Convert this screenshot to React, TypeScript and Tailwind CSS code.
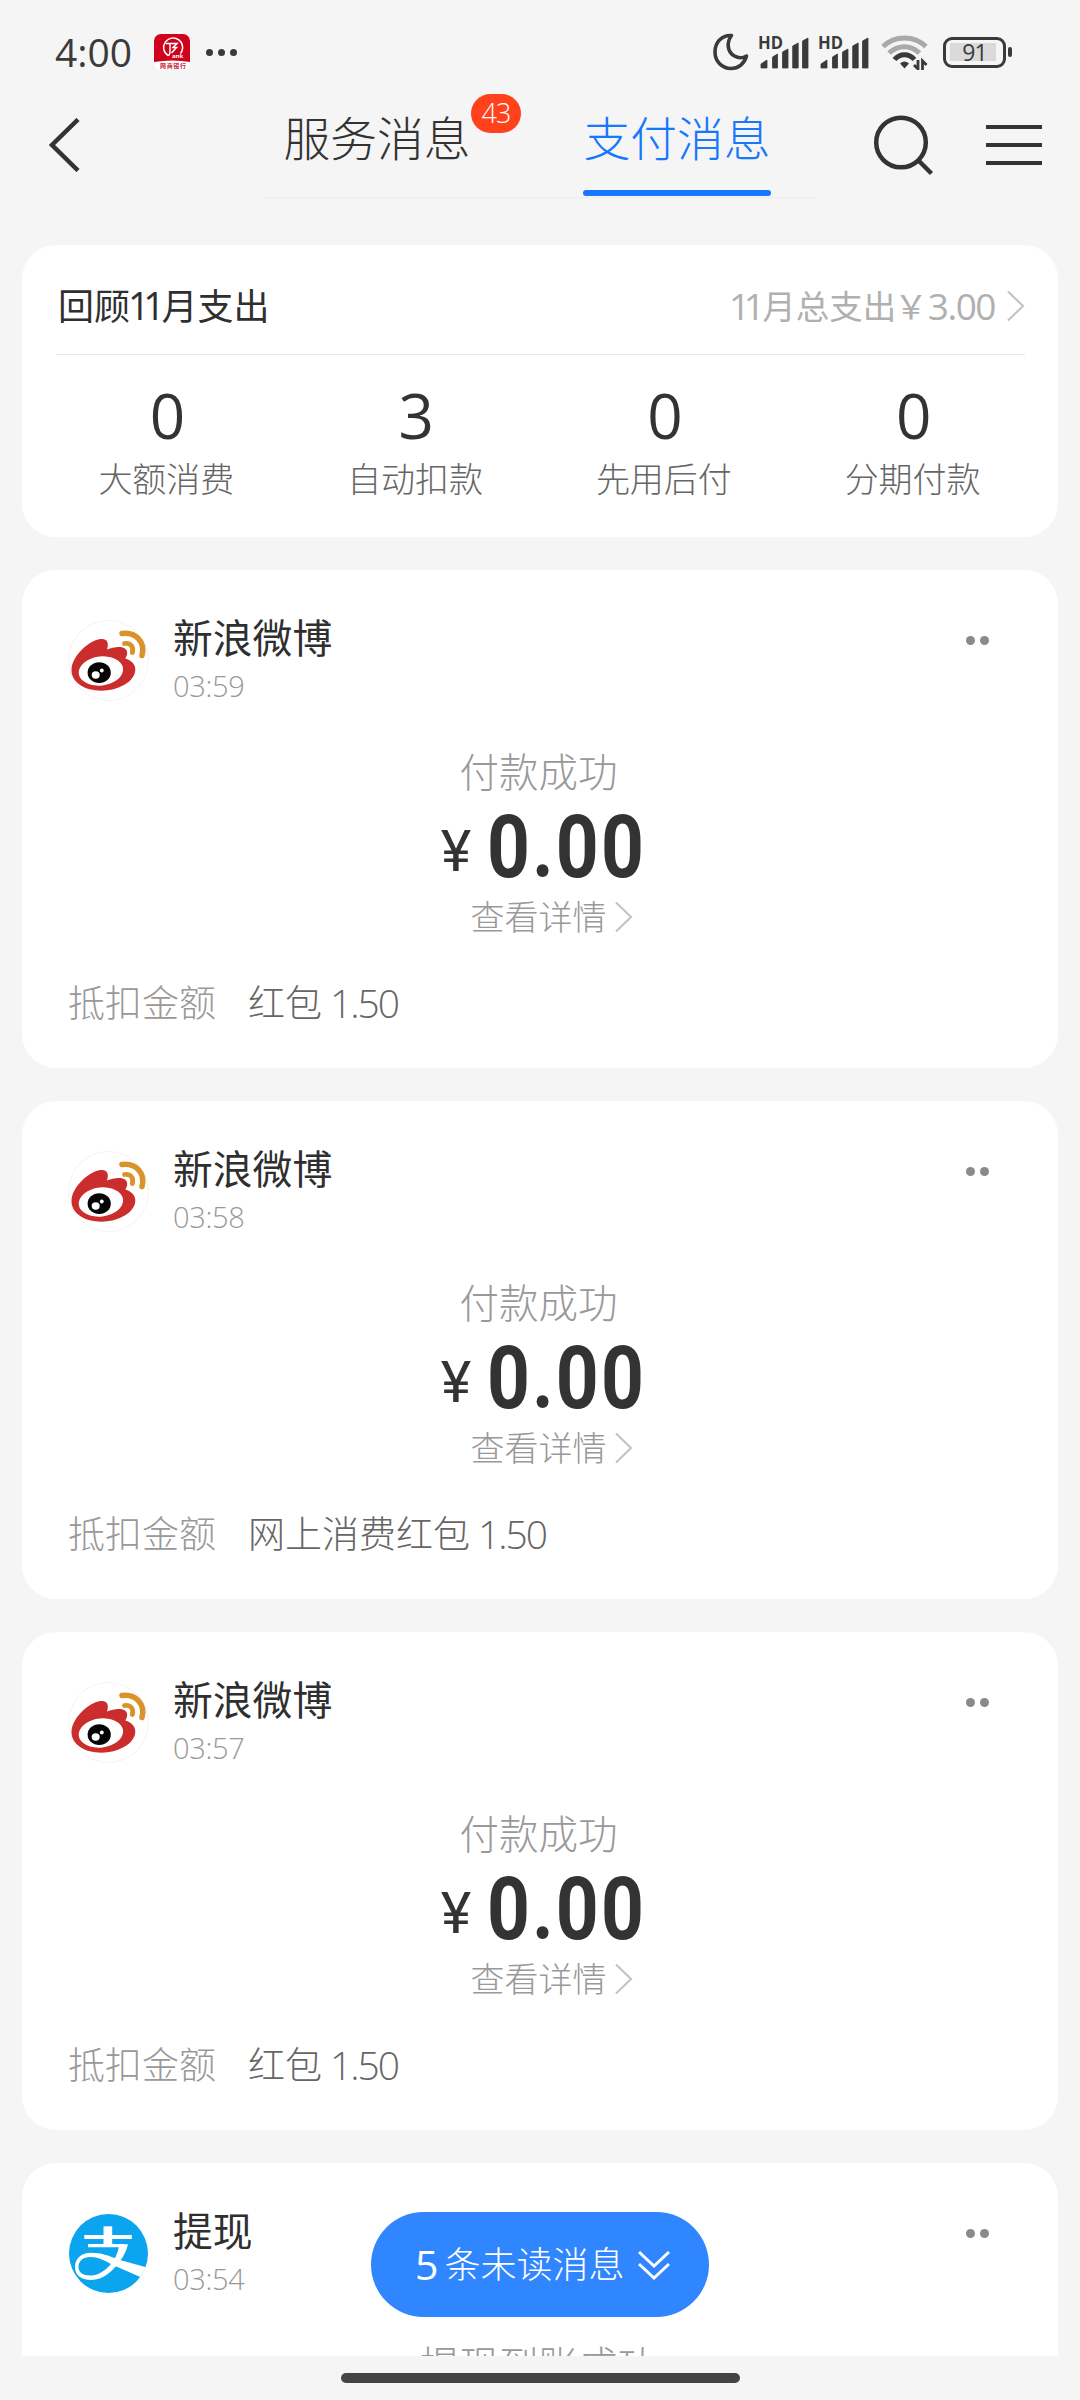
// App.tsx
import type { ReactNode } from 'react'

interface Message {
  name: string
  time: string
  logo: 'weibo' | 'alipay'
  status: string
  amount?: string
  discount?: [string, string]
}

const messages: Message[] = [
  { name: '新浪微博', time: '03:59', logo: 'weibo', status: '付款成功', amount: '0.00', discount: ['红包', '1.50'] },
  { name: '新浪微博', time: '03:58', logo: 'weibo', status: '付款成功', amount: '0.00', discount: ['网上消费红包', '1.50'] },
  { name: '新浪微博', time: '03:57', logo: 'weibo', status: '付款成功', amount: '0.00', discount: ['红包', '1.50'] },
  { name: '提现', time: '03:54', logo: 'alipay', status: '提现到账成功' },
]

const stats = [
  { value: '0', label: '大额消费' },
  { value: '3', label: '自动扣款' },
  { value: '0', label: '先用后付' },
  { value: '0', label: '分期付款' },
]

function WeiboLogo() {
  return (
    <svg width="81" height="81" viewBox="0.5 0 81 81" fill="none">
      <circle cx="41" cy="40.5" r="40" fill="#fff" stroke="#f7f1f1" />
      <path d="M4 50C4 37 20 21 33 19c6-.8 9 3 6.500 10.500C46 27 54 25.500 58 29c2.600 2.600 2 6-.2 9.500C64 40.500 67.800 44 67.800 49.500 67.800 62 50 70.700 34 70.700 17 70.700 4 62.500 4 50Z" fill="#cb2c2c" />
      <ellipse cx="33.400" cy="51" rx="22.300" ry="14.500" transform="rotate(-7 33.400 51)" fill="#fff" />
      <ellipse cx="31.700" cy="52.700" rx="11.600" ry="10.400" fill="#050505" />
      <ellipse cx="28.200" cy="55" rx="4" ry="3.700" fill="#fff" />
      <circle cx="34.300" cy="50.500" r="1.900" fill="#fff" />
      <path d="M54.500 13.500C68 11.500 78 22 74.500 35.500" stroke="#d8942a" strokeWidth="5.500" strokeLinecap="round" />
      <path d="M57 23.500c6-1 9.500 3.500 7.800 9" stroke="#d8942a" strokeWidth="4.800" strokeLinecap="round" />
    </svg>
  )
}

function AlipayLogo() {
  return (
    <svg width="81" height="81" viewBox="-1 -1 81 81" fill="none">
      <circle cx="39.500" cy="39.500" r="39.500" fill="#0aa5ee" />
      <path d="M34.500 12.300h8.700V32h-8.700z" fill="#fff" />
      <path d="M15.300 23h47.500" stroke="#fff" strokeWidth="4" />
      <path d="M19 31.700h36" stroke="#fff" strokeWidth="3.200" />
      <path d="M50.500 30.200h8.500C57.500 36.500 54.500 42.500 51 47c-7 10-17 19-29 19C12 66 6 61 6 53c0-9 7-14.200 16-14.200 10 0 18.500 3 25.500 6.200L77 53.300 71.300 63 45 51.500C38 48 30.500 43 21.500 43 14 43 9.500 47 9.500 53c0 5 4 8.500 12 8.500 10 0 18.500-8 23.500-15.500 2.500-4.500 4.500-10 5.500-15.800Z" fill="#fff" />
    </svg>
  )
}

function Signal() {
  return (
    <svg width="50" height="36" viewBox="0 0 50 36" fill="#3a3a3a" className="overflow-visible">
      <text x="-1" y="14.500" fontSize="17" fontWeight="700" textLength="25" lengthAdjust="spacingAndGlyphs">HD</text>
      <path d="M2 34v-4l6-4v8zM13.500 34V23l5-3v14zM23.500 34V18l5.500-3v19zM33.700 34V12l5.500-3v25zM43.500 34V7l5.500-3v30z" stroke="#3a3a3a" strokeWidth=".8" strokeLinejoin="round" />
    </svg>
  )
}

function StatusBar() {
  return (
    <div className="flex h-[84px] shrink-0 items-center pt-5 pl-[55px] text-[#3a3a3a]">
      <span className="w-[78px] text-[39px] leading-10 whitespace-nowrap">4:00</span>
      <svg width="36" height="36" viewBox="0 0 36 36" className="ml-[21px]" fill="none">
        <rect width="36" height="36" rx="7" fill="#fff" />
        <path d="M0 28V7a7 7 0 0 1 7-7h22a7 7 0 0 1 7 7v21q-18-3-36 0Z" fill="#d0021b" />
        <path d="M14 21.500a9.500 9.500 0 1 1 12.500-2M12 9.500h11l-4 4h3.500l-5 5.500M16 10v7q0 4-2 4.500" stroke="#fff" strokeWidth="1.500" />
        <text x="18" y="24" fontSize="6" fontWeight="700" fill="#fff">ank</text>
        <text x="6" y="34" fontSize="6" fontWeight="700" fill="#c6283a" textLength="26">网商银行</text>
      </svg>
      <div className="ml-[16px] flex gap-[5px]">
        <i className="size-[7px] rounded-full bg-[#3a3a3a]" />
        <i className="size-[7px] rounded-full bg-[#3a3a3a]" />
        <i className="size-[7px] rounded-full bg-[#3a3a3a]" />
      </div>
      <svg width="36" height="38" viewBox="0 0 36 38" className="ml-[476px]" fill="none" stroke="#3a3a3a" strokeWidth="3.600" strokeLinejoin="round">
        <path d="M18.500 2.500C9 2 2 9 2 19c0 9.500 7 16.500 16 16.500 7.500 0 13.500-5 15.500-12.500-3.500 2-8 2.500-12 0C14 19 13.500 9 18.500 2.500Z" />
      </svg>
      <div className="ml-[10px] flex gap-[10px]">
        <Signal />
        <Signal />
      </div>
      <svg width="48" height="36" viewBox="0 0 48 36" className="ml-[12px]" fill="none" strokeWidth="5">
        <path d="M2 12.500C14 1 33 1 45 12.500" stroke="#a9a9a9" />
        <path d="M8 19c9-8.500 21.500-8.500 30.500 0" stroke="#a9a9a9" />
        <path d="M13.500 25.500c5.500-6.500 14.500-6.500 20 0" stroke="#3a3a3a" />
        <path d="M19 29.500q4.500-4 9 0l-4.500 5z" fill="#3a3a3a" />
        <path d="M37 26v9l-4-4M41.500 36v-9l4 4" stroke="#3a3a3a" strokeWidth="2.800" />
      </svg>
      <div className="ml-[14px] flex h-[31px] w-[63px] items-center justify-center rounded-[9px] border-[3.500px] border-[#3a3a3a] p-[3.500px]">
        <span className="h-full w-full bg-[linear-gradient(to_right,#dadada_91%,transparent_91%)] text-center text-[23px] leading-[18px] tracking-[-1px]">91</span>
      </div>
      <i className="ml-[2px] h-[10px] w-1 rounded-sm bg-[#3a3a3a]" />
    </div>
  )
}

function Tab({ children, active, badge }: { children: ReactNode; active?: boolean; badge?: number }) {
  return (
    <div className={`relative flex h-[112px] w-[188px] flex-col items-center ${active ? 'text-[#1677ff]' : 'text-[#333]'}`}>
      <span className="mt-[30px] text-[46.800px] leading-[48px] font-light whitespace-nowrap">{children}</span>
      {active && <i className="mt-[28px] h-[6px] w-full rounded-full bg-[#1677ff]" />}
      {badge && (
        <span className="absolute top-[10px] left-[188px] flex h-[39px] w-[50px] items-center justify-center rounded-full bg-[#ff411c] text-[27px] font-light tracking-[-1px] text-white">
          {badge}
        </span>
      )}
    </div>
  )
}

function Header() {
  return (
    <div className="flex h-[114px] shrink-0 items-start pl-[48px]">
      <svg width="32" height="54" viewBox="0 0 32 54" className="mt-[34px]" fill="none" stroke="#333" strokeWidth="4.500">
        <path d="M30 1.500 4 27l26 25.500" />
      </svg>
      <div className="ml-[185px] flex h-[114px] w-[550px] gap-[112px] border-b-[1.500px] border-[#ececec] pl-[18px]">
        <Tab badge={43}>服务消息</Tab>
        <Tab active>支付消息</Tab>
      </div>
      <svg width="62" height="62" viewBox="0 0 62 62" className="ml-[57px] mt-[30px]" fill="none" stroke="#333" strokeWidth="4.500">
        <circle cx="29" cy="28.500" r="24.800" />
        <path d="m46 46 13.500 13.500" />
      </svg>
      <div className="ml-[52px] mt-[41px] flex flex-col gap-[14px]">
        <i className="h-1 w-14 bg-[#333]" />
        <i className="h-1 w-14 bg-[#333]" />
        <i className="h-1 w-14 bg-[#333]" />
      </div>
    </div>
  )
}

function Chevron() {
  return (
    <svg width="18" height="32" viewBox="0 0 18 32" fill="none" stroke="#c4c4c4" strokeWidth="2.200">
      <path d="m1 1.500 15 14.500L1 30.500" />
    </svg>
  )
}

function Summary() {
  return (
    <div className="h-[292px] shrink-0 rounded-[34px] bg-white pl-[34px] pr-[33px]">
      <div className="flex h-[110px] items-center justify-between border-b border-[#e8e8e8] pt-[12px] pl-[2px]">
        <span className="text-[36px] leading-[44px] text-[#2f2f2f]">
          回顾<span className="-ml-[2px] text-[38px] tracking-[-6.500px]">11</span><span className="ml-[3px]">月支出</span>
        </span>
        <span className="flex items-center text-[33.500px] leading-[40px] text-[#b0b0b0]">
          <span className="text-[37px] tracking-[-6.500px]">11</span>
          <span className="ml-[4px]">月总支出</span>
          <span className="-ml-[2px]">￥</span>
          <span className="mr-[12px] text-[37px] tracking-[-1.500px]">3.00</span>
          <Chevron />
        </span>
      </div>
      <div className="-mx-[13px] grid grid-cols-4 pt-[30px] text-center">
        {stats.map(s => (
          <div key={s.label}>
            <div className="text-[62px] leading-[60px] text-[#333]">{s.value}</div>
            <div className="mt-[14px] -ml-[2px] text-[34px] leading-[40px] font-light text-[#666]">{s.label}</div>
          </div>
        ))}
      </div>
    </div>
  )
}

function MessageCard({ message: m }: { message: Message }) {
  return (
    <div className="h-[498px] shrink-0 rounded-[34px] bg-white pt-[48px] pl-[46px] pr-[69px]">
      <div className="flex items-start">
        <div className="mt-[2px]">{m.logo === 'weibo' ? <WeiboLogo /> : <AlipayLogo />}</div>
        <div className="ml-[24px]">
          <div className="text-[39.800px] leading-10 text-[#2f2f2f]">{m.name}</div>
          <div className="mt-[12px] text-[29px] leading-8 font-light tracking-[-0.300px] text-[#999]">{m.time}</div>
        </div>
        <div className="ml-auto mt-[18px] flex gap-[5px]">
          <i className="size-[9px] rounded-full bg-[#8a8a8a]" />
          <i className="size-[9px] rounded-full bg-[#8a8a8a]" />
        </div>
      </div>
      <div className="-mr-[20px] flex flex-col items-center">
        <div className="mt-[48px] text-[39.500px] leading-[44px] font-light text-[#999]">{m.status}</div>
        {m.amount && (
          <>
            <div className="mt-[13px] flex h-20 items-center pl-[10px] font-['Roboto',sans-serif] text-[#333]">
              <span className="mt-[8px] mr-[16px] text-[58px] leading-none">¥</span>
              <span className="-ml-[26px] origin-right scale-x-[0.86] text-[87px] leading-20 font-bold tracking-[2.500px]">{m.amount}</span>
            </div>
            <div className="mt-[10px] flex items-center gap-2 pl-[26px] text-[34px] leading-10 font-light text-[#999]">
              查看详情
              <Chevron />
            </div>
          </>
        )}
      </div>
      {m.discount && (
        <div className="mt-[44px] flex text-[37px] leading-[44px] font-light">
          <span className="text-[#999]">抵扣金额</span>
          <span className="ml-[32px] text-[#666]">{m.discount[0]}</span>
          <span className="ml-[8px] text-[39px] tracking-[-2px] text-[#666]">{m.discount[1]}</span>
        </div>
      )}
    </div>
  )
}

export default function App() {
  return (
    <div className="relative flex h-[2400px] w-[1080px] flex-col overflow-hidden bg-[#f5f5f5] font-['Open_Sans','Noto_Sans_CJK_SC',sans-serif]">
      <StatusBar />
      <Header />
      <main className="flex h-[2158px] shrink-0 flex-col gap-[33px] overflow-hidden px-[22px] pt-[47px]">
        <Summary />
        {messages.map(m => <MessageCard key={m.time} message={m} />)}
      </main>
      <i className="mx-auto mt-[17px] h-[10px] w-[399px] shrink-0 rounded-full bg-[#444]" />
      <button className="absolute top-[2212px] left-[371px] flex h-[105px] w-[338px] items-center rounded-full bg-[#3086ff] pl-[44px] text-white">
        <span className="text-[41px] leading-none">5</span>
        <span className="ml-[6px] text-[36px] leading-none font-light whitespace-nowrap">条未读消息</span>
        <svg width="32" height="32" viewBox="0 0 32 32" className="ml-[14px]" fill="none" stroke="currentColor" strokeWidth="3">
          <path d="m1 3 15 14L31 3M1 15l15 14 15-14" />
        </svg>
      </button>
    </div>
  )
}
